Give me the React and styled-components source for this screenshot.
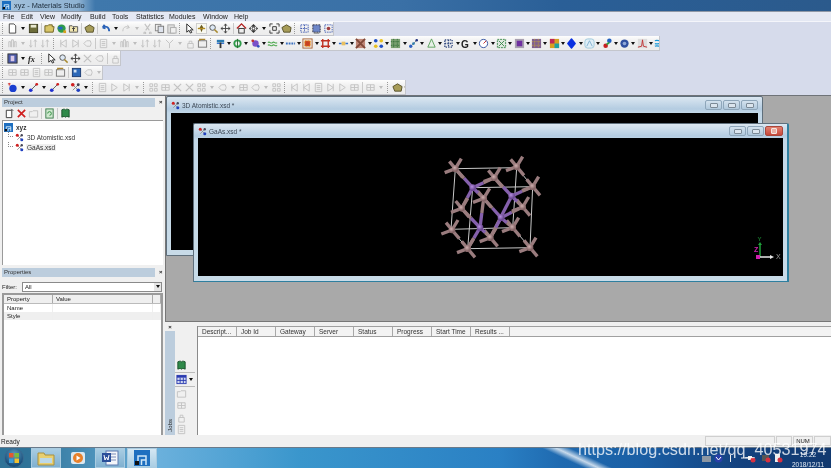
import React from "react";
import styled, { createGlobalStyle } from "styled-components";

const GlobalStyle = createGlobalStyle`
  html, body { margin: 0; padding: 0; background: #000; }
  body { font-family: "Liberation Sans", Arial, sans-serif; }
`;

const Screen = styled.div`
  position: relative;
  width: 831px;
  height: 468px;
  overflow: hidden;
  display: flex;
  flex-direction: column;
  background: #d6dbeb;
  color: #222;
  font-size: 6.5px;
  filter: blur(0.3px);
`;

const TitleBar = styled.div`
  height: 11px;
  flex: none;
  display: flex;
  align-items: center;
  gap: 3px;
  padding-left: 2px;
  font-size: 7.4px;
  color: #1c2b3a;
  background: linear-gradient(90deg, #a9c5dd 0, #9dbdd9 24px, #8fb3d3 78px, #3f78ac 95px, #3a70a6 400px, #2a5f97 560px, #2b5a8c 831px);
`;

const MenuBar = styled.div`
  height: 11px;
  flex: none;
  display: flex;
  align-items: center;
  background: #e4e8f3;
  border-bottom: 1px solid #f4f5fa;
  border-top: 1px solid #8f98a6;
  box-sizing: border-box;
`;

const MenuItem = styled.span`
  width: ${(p) => p.$w}px;
  padding-left: 3px;
  box-sizing: border-box;
  font-size: 7px;
  color: #222;
`;

const Toolbars = styled.div`
  height: 73px;
  flex: none;
  display: flex;
  flex-direction: column;
  background: #d6dbeb;
  border-bottom: 1px solid #6f7378;
`;

const ToolRow = styled.div`
  height: ${(p) => p.$h}px;
  width: ${(p) => p.$w}px;
  flex: none;
  box-sizing: border-box;
  display: flex;
  align-items: center;
  overflow: hidden;
  background: linear-gradient(#fdfdfd, #f0f0f0 40%, #ececec);
  border-right: 1px solid #c4c6cc;
  border-bottom: 1px solid #c4c6cc;
`;

const Tool = styled.span`
  width: 12px;
  height: 12px;
  flex: none;
  display: flex;
  align-items: center;
  justify-content: center;
`;

const ToolIcon = styled.svg`
  width: 11px;
  height: 11px;
  display: block;
`;

const Caret = styled.span`
  width: ${(p) => p.$w}px;
  flex: none;
  display: flex;
  justify-content: center;
  &::after {
    content: "";
    border-left: 2.5px solid transparent;
    border-right: 2.5px solid transparent;
    border-top: 3px solid ${(p) => (p.$off ? "#bdbdbd" : "#111")};
  }
`;

const Sep = styled.span`
  width: 4px;
  height: 11px;
  flex: none;
  display: flex;
  justify-content: center;
  &::after {
    content: "";
    width: 1px;
    background: #c9c9c9;
  }
`;

const Grip = styled.span`
  width: 6px;
  height: 11px;
  flex: none;
  display: flex;
  justify-content: center;
  &::after {
    content: "";
    width: 1px;
    border-left: 1px dotted #9a9a9a;
  }
`;

const Workspace = styled.div`
  flex: 1;
  min-height: 0;
  display: flex;
  background: #f0f0f0;
`;

const SidePanel = styled.div`
  width: 165px;
  flex: none;
  display: flex;
  flex-direction: column;
  background: #f0f0f0;
`;

const DockHead = styled.div`
  height: 9px;
  margin: ${(p) => p.$m};
  display: flex;
  align-items: center;
  gap: 4px;
`;

const DockTitle = styled.div`
  flex: 1;
  height: 9px;
  line-height: 9px;
  padding-left: 2px;
  background: #bccddd;
  font-size: 6px;
  color: #333;
`;

const DockClose = styled.span`
  width: 5px;
  font-size: 6px;
  line-height: 9px;
  font-weight: bold;
  color: #222;
`;

const ProjectTools = styled.div`
  height: 13px;
  padding-left: 3px;
  display: flex;
  align-items: center;
`;

const Tree = styled.div`
  height: 145px;
  margin: 0 0 0 2px;
  width: 161px;
  box-sizing: border-box;
  padding-top: 1px;
  background: #fff;
  border-left: 1px solid #9a9a9a;
  border-top: 1px solid #9a9a9a;
`;

const TreeRow = styled.div`
  height: 10px;
  display: flex;
  align-items: center;
  gap: 2px;
  padding-left: ${(p) => p.$in}px;
  font-size: 6.5px;
  font-weight: ${(p) => (p.$bold ? "bold" : "normal")};
  color: #333;
`;

const TreeLink = styled.span`
  width: 5px;
  height: 5px;
  margin-bottom: 5px;
  flex: none;
  box-sizing: border-box;
  border-left: 1px dotted #888;
  border-bottom: 1px dotted #888;
`;

const TreeLabel = styled.span`
  padding: 0 1px;
  background: ${(p) => (p.$selected ? "#f0f0f0" : "transparent")};
`;

const FilterRow = styled.div`
  height: 11px;
  margin: 4px 2px 1px 2px;
  display: flex;
  align-items: center;
  gap: 5px;
  font-size: 6px;
`;

const FilterBox = styled.div`
  flex: 1;
  height: 10px;
  margin-right: 1px;
  box-sizing: border-box;
  display: flex;
  align-items: center;
  justify-content: space-between;
  padding-left: 2px;
  background: #fff;
  border: 1px solid #8a8a8a;
`;

const FilterArrow = styled.span`
  width: 7px;
  height: 8px;
  display: flex;
  align-items: center;
  justify-content: center;
  background: #e6e6e6;
  &::after {
    content: "";
    border-left: 2px solid transparent;
    border-right: 2px solid transparent;
    border-top: 3px solid #111;
  }
`;

const PropsTable = styled.div`
  flex: 1;
  margin: 0 2px;
  box-sizing: border-box;
  background: #fff;
  border: 2px solid #9a9a9a;
  border-bottom: none;
`;

const PropHead = styled.div`
  height: 8px;
  display: grid;
  grid-template-columns: 49px 100px 1fr;
  background: #efefef;
  border-bottom: 1px solid #bbb;
`;

const PropCell = styled.div`
  padding-left: 3px;
  font-size: 6px;
  line-height: 8px;
  border-right: 1px solid ${(p) => (p.$head ? "#aaa" : "#eee")};
`;

const PropRow = styled.div`
  height: 8px;
  display: grid;
  grid-template-columns: 49px 100px 1fr;
  background: ${(p) => (p.$alt ? "#efefef" : "#fff")};
`;

const RightColumn = styled.div`
  flex: 1;
  min-width: 0;
  display: flex;
  flex-direction: column;
`;

const Desktop = styled.div`
  position: relative;
  height: 225px;
  flex: none;
  background: #a9a9a9;
  border-left: 1px solid #777;
  border-bottom: 1px solid #777;
`;

const MdiWindow = styled.div`
  position: absolute;
  left: ${(p) => p.$x}px;
  top: ${(p) => p.$y}px;
  width: ${(p) => p.$w}px;
  height: ${(p) => p.$h}px;
  box-sizing: border-box;
  display: flex;
  flex-direction: column;
  padding: 0 4px 5px 4px;
  border: 1px solid #5f6f7c;
  border-radius: 2px 2px 0 0;
  background: linear-gradient(#dbe7f1, #b4cce1 12px, #c3d8e8 16px, #c8dbe8);
  ${(p) => p.$front && "border-right: 2px solid #2f7f9f; border-bottom-color: #2f7f9f;"}
`;

const WinTitle = styled.div`
  height: ${(p) => (p.$front ? 14 : 16)}px;
  flex: none;
  display: flex;
  align-items: center;
  gap: 2px;
  font-size: 6.5px;
  color: #3c4754;
`;

const WinButtons = styled.div`
  margin-left: auto;
  display: flex;
  gap: 1px;
`;

const WinButton = styled.span`
  width: ${(p) => (p.$close ? 16 : 15)}px;
  height: 8px;
  display: flex;
  align-items: center;
  justify-content: center;
  border: 1px solid ${(p) => (p.$close ? "#a9473c" : "#8ea6ba")};
  border-radius: 2px;
  background: ${(p) => (p.$close ? "linear-gradient(#e2806f, #c8483a)" : "linear-gradient(#d4e2ee, #b0c8dc)")};
  &::after {
    content: "";
    width: ${(p) => (p.$close ? 4 : 6)}px;
    height: ${(p) => (p.$close ? 4 : 3)}px;
    border: 1px solid ${(p) => (p.$close ? "#f4e4e0" : "#7c8a96")};
    border-radius: 1px;
    background: ${(p) => (p.$close ? "#e9b0a6" : "#dbe5ee")};
  }
`;

const Viewport = styled.div`
  position: relative;
  flex: 1;
  min-height: 0;
  background: #000;
`;

const Crystal = styled.svg`
  position: absolute;
  left: 223px;
  top: 8px;
  width: 130px;
  height: 115px;
`;

const Axes = styled.svg`
  position: absolute;
  right: 0px;
  bottom: 10px;
  width: 32px;
  height: 30px;
`;

const JobsPanel = styled.div`
  flex: 1;
  min-height: 0;
  display: flex;
  background: #f0f0f0;
`;

const JobsDock = styled.div`
  width: 10px;
  flex: none;
  display: flex;
  flex-direction: column;
`;

const JobsClose = styled.div`
  height: 9px;
  text-align: center;
  font-size: 6px;
  font-weight: bold;
  line-height: 10px;
`;

const JobsTab = styled.div`
  flex: 1;
  display: flex;
  align-items: flex-end;
  justify-content: center;
  background: #bccddd;
`;

const JobsLabel = styled.span`
  writing-mode: vertical-rl;
  transform: rotate(180deg);
  font-size: 6px;
  padding-top: 3px;
  color: #222;
`;

const JobsTools = styled.div`
  width: 22px;
  flex: none;
  padding-top: 37px;
  box-sizing: border-box;
  display: flex;
  flex-direction: column;
  align-items: flex-start;
`;

const JobsTool = styled.div`
  height: ${(p) => (p.$rule ? 15 : 12.5)}px;
  display: flex;
  align-items: center;
  width: 20px;
  box-sizing: border-box;
  border-bottom: ${(p) => (p.$rule ? "1px solid #bbb" : "none")};
`;

const JobsTable = styled.div`
  flex: 1;
  margin-top: 4px;
  background: #fff;
  border-left: 1px solid #8a8a8a;
`;

const JobsHead = styled.div`
  height: 11px;
  display: flex;
  background: #f3f3f3;
  border-top: 1px solid #a0a0a0;
  border-bottom: 1px solid #a0a0a0;
  box-sizing: border-box;
`;

const JobsCol = styled.div`
  width: 39px;
  box-sizing: border-box;
  padding-left: 4px;
  font-size: 6.5px;
  line-height: 10px;
  white-space: nowrap;
  color: #333;
  border-right: 1px solid #a8a8a8;
`;

const StatusBar = styled.div`
  height: 12px;
  flex: none;
  display: flex;
  align-items: center;
  background: #f0f0f0;
  font-size: 6.5px;
  color: #222;
`;

const StatusText = styled.span`
  padding-left: 1px;
  margin-right: auto;
`;

const StatusPane = styled.span`
  width: ${(p) => p.$w}px;
  height: 10px;
  box-sizing: border-box;
  margin-left: 1px;
  text-align: center;
  line-height: 9px;
  font-size: 6px;
  border: 1px solid #cfcfcf;
`;

const Taskbar = styled.div`
  height: 21px;
  flex: none;
  box-sizing: border-box;
  display: flex;
  align-items: center;
  border-top: 1px solid #6a7a8a;
  background:
    linear-gradient(25deg, transparent 247px, rgba(255, 255, 255, 0.75) 253px, transparent 259px),
    linear-gradient(90deg, #2f7398 0, #2f7398 28px, #6ab0dc 160px, #3a96cc 300px, #2a80c4 500px, #1f6ab0 560px, #1a5fa5 640px, #14427f 740px, #12396f 831px);
`;

const StartOrb = styled.div`
  width: 20px;
  height: 20px;
  flex: none;
  margin: 0 7px 0 4px;
  border-radius: 50%;
  border: 1px solid #3a6a90;
  box-sizing: border-box;
  display: flex;
  align-items: center;
  justify-content: center;
  background: radial-gradient(circle at 50% 30%, #5f9cc0, #184f7c 70%);
`;

const TaskButton = styled.div`
  width: 30px;
  height: 20px;
  flex: none;
  box-sizing: border-box;
  margin-right: 2px;
  display: flex;
  align-items: center;
  justify-content: center;
  border: ${(p) => (p.$plain ? "none" : "1px solid #a9cbe0")};
  background: ${(p) =>
    p.$active
      ? "linear-gradient(#d4e7f3, #a9cde3)"
      : p.$plain
      ? "transparent"
      : "linear-gradient(#a9cde3, #7fb0d0)"};
`;

const Tray = styled.div`
  margin-left: auto;
  display: flex;
  align-items: center;
  gap: 3px;
  padding-right: 1px;
`;

const TrayIcon = styled.svg`
  width: ${(p) => p.$w || 9}px;
  height: 9px;
`;

const Clock = styled.div`
  width: 44px;
  padding-top: 3px;
  text-align: center;
  font-size: 6.5px;
  line-height: 10px;
  color: #e6edf5;
`;

const Watermark = styled.div`
  position: absolute;
  left: 578px;
  top: 440px;
  font-size: 16.2px;
  line-height: 18px;
  color: rgba(255, 255, 255, 0.78);
  white-space: nowrap;
`;

const grey = "#c2c2c2";
const bars = (c) => (
  <path d="M2 10V4h2v6M5 10V2h2v8M8 10V4h2v6" fill="none" stroke={c} />
);

// 12 x 12 drawings for the toolbar buttons
const ICONS = {
  doc: <path d="M2.5 1h5l2 2v8h-7z" fill="#fff" stroke="#444" />,
  save: <><rect x="1.5" y="1.5" width="9" height="9" fill="#6d6d3a" stroke="#3c3c20" /><rect x="3" y="2" width="6" height="3" fill="#e8e8d0" /></>,
  open: <path d="M1 10V3h3l1-1h4v2h2l-1 6z" fill="#d8c568" stroke="#6a5e20" />,
  globe: <><circle cx="6" cy="6" r="4.5" fill="#2f9b4a" /><path d="M2 4h5v3H3z" fill="#2266c4" /><path d="M8 8h3v3H8z" fill="#d8a020" /></>,
  folderUp: <><path d="M1.5 10V3h3l1 1h5v6z" fill="#f1e6b0" stroke="#555" /><path d="M6 9V5M4.5 6.5 6 5l1.5 1.5" stroke="#333" fill="none" /></>,
  box: <path d="M1 5l5-3 5 3-1 5H3z" fill="#a79c58" stroke="#55502a" />,
  undo: <path d="M10 9C10 4 6 3 3 5L5 2M3 5l3 1" fill="none" stroke="#2a62b8" strokeWidth="2" />,
  redo: <path d="M2 9c0-5 4-6 7-4L7 2M9 5 6 6" fill="none" stroke={grey} />,
  cut: <path d="M3 1l5 7M9 1 4 8M3 10a1 1 0 1 0 .1 0M9 10a1 1 0 1 0 .1 0" fill="none" stroke={grey} strokeWidth="1.2" />,
  copy: <><rect x="1.5" y="1.5" width="6" height="7" fill="#eee" stroke="#888" /><rect x="4.5" y="3.5" width="6" height="7" fill="#dfe4ee" stroke="#777" /></>,
  paste: <><rect x="2" y="2" width="7" height="9" fill="#ddd" stroke="#aaa" /><rect x="5" y="5" width="6" height="6" fill="#f0f0f0" stroke="#aaa" /></>,
  cursor: <path d="M3 1v9l2.5-2 1.5 3 1.5-.7L7 7.5h3z" fill="#fff" stroke="#222" />,
  rotate: <><rect x="0.5" y="0.5" width="11" height="11" fill="#f8f8f0" stroke="#ccc" /><path d="M6 2l2 3-2 5-2-5z" fill="#6b5b1e" /><path d="M2 6h8" stroke="#b08a20" strokeWidth="1.5" /></>,
  zoom: <><circle cx="5" cy="5" r="3" fill="#dde8f4" stroke="#555" /><path d="M7 7l3.5 3.5" stroke="#a88a30" strokeWidth="1.6" /></>,
  pan: <path d="M6 1v10M1 6h10M6 1 4.5 3M6 1l1.5 2M6 11 4.5 9M6 11l1.5-2M1 6l2-1.5M1 6l2 1.5M11 6 9 4.5M11 6 9 7.5" fill="none" stroke="#444" />,
  house: <><path d="M1 6l5-5 5 5" fill="none" stroke="#b02020" strokeWidth="1.4" /><rect x="3" y="6" width="6" height="5" fill="#eee" stroke="#333" /></>,
  arrows: <><path d="M6 1l3 3H3zM6 11 3 8h6zM1 6l2-2v4zM11 6 9 4v4z" fill="#333" /><circle cx="6" cy="6" r="1.5" fill="#fff" stroke="#333" /></>,
  fit: <path d="M1 4V1h3M8 1h3v3M11 8v3H8M4 11H1V8M4 4h4v4H4z" fill="none" stroke="#333" />,
  lat1: <path d="M2 2h8v8H2z M6 2v8M2 6h8" fill="none" stroke="#3a55b0" strokeDasharray="1.5 1" />,
  lat2: <><rect x="2" y="2" width="8" height="8" fill="#6d86c8" stroke="#334" strokeDasharray="2 1" /><path d="M3 11h6" stroke="#666" /></>,
  lat3: <><path d="M2 2h8v8H2z" fill="none" stroke="#3a55b0" strokeDasharray="1.5 1" /><circle cx="6" cy="6" r="2" fill="#a04040" /></>,
  bars: bars(grey),
  updown: <path d="M3 2v8M1.5 8 3 10l1.5-2M8 10V2M6.5 4 8 2l1.5 2" fill="none" stroke={grey} />,
  triL: <path d="M9 2v8L3 6zM3 2v8" fill="none" stroke={grey} />,
  triR: <path d="M3 2v8l6-4zM9 2v8" fill="none" stroke={grey} />,
  hexa: <path d="M2 6l3-3h4l1 3-1 3H5z" fill="none" stroke={grey} />,
  page: <path d="M2.5 1.5h7v9h-7zM4 4h4M4 6h4M4 8h4" fill="none" stroke={grey} />,
  fork: <path d="M2 2l4 4 4-4M6 6v5" fill="none" stroke={grey} />,
  lock: <path d="M3 6h6v5H3zM4.5 6V3.5h3V6" fill="none" stroke={grey} />,
  grid: <path d="M2 3h8v6H2zM2 6h8M6 3v6" fill="none" stroke={grey} />,
  play: <path d="M3 2l6 4-6 4z" fill="none" stroke={grey} />,
  nodes: <path d="M2 2l4 4 4-4M2 10l4-4 4 4" fill="none" stroke={grey} strokeWidth="1.2" />,
  fxa: <><rect x="1" y="1" width="10" height="10" fill="#4b5aa8" stroke="#333" /><rect x="4" y="3" width="4" height="6" fill="#d9c8e8" /></>,
  fx: <text x="0" y="10" fontSize="9" fontFamily="Liberation Serif, serif" fontStyle="italic" fontWeight="bold" fill="#222">fx</text>,
  panel: <><rect x="1.5" y="3" width="9" height="7" fill="#eee" stroke="#777" /><path d="M3 3V1.5h6" fill="none" stroke="#a88430" strokeWidth="1.4" /></>,
  blueDoc: <><rect x="1.5" y="1.5" width="9" height="9" fill="#2c68b8" stroke="#1a3a70" /><rect x="3" y="3" width="3" height="3" fill="#cfe0f0" /></>,
  ball: <><circle cx="6.5" cy="7" r="4" fill="#1a3fd0" /><path d="M1 2h3M2.5 1v3" stroke="#d03030" /></>,
  link: <><path d="M2 10l8-8" stroke="#555" /><circle cx="3" cy="9" r="2" fill="#2030d0" /><circle cx="9.5" cy="2.5" r="1.5" fill="#d02020" /></>,
  cells: <path d="M2 2h3v3H2zM7 2h3v3H7zM2 7h3v3H2zM7 7h3v3H7z" fill="none" stroke={grey} />,
  atomB: <><path d="M2 6h8" stroke="#2c6ad0" /><rect x="2" y="2" width="8" height="3" fill="#2a7ab0" /><rect x="5" y="5" width="2" height="6" fill="#333" /></>,
  spinG: <><circle cx="6" cy="6" r="3.5" fill="none" stroke="#2f9b4a" strokeWidth="2" /><path d="M6 1v10" stroke="#2a6a30" /></>,
  spinP: <><circle cx="6" cy="6" r="3.5" fill="#7a50c8" /><circle cx="3" cy="3" r="1.5" fill="#c03030" /><circle cx="9" cy="9" r="1.5" fill="#3050c0" /></>,
  green: <path d="M1 5c2-2 3 2 5 0s3 2 5 0M1 8c2-2 3 2 5 0s3 2 5 0" fill="none" stroke="#4aa84a" strokeWidth="1.2" />,
  dash: <path d="M1 6h10" stroke="#3a70c0" strokeWidth="2" strokeDasharray="2 1" />,
  check: <><rect x="1" y="1" width="10" height="10" fill="none" stroke="#a86030" /><path d="M3 3h6v6H3z" fill="#c84020" stroke="#f0a020" strokeDasharray="2 1" /></>,
  wires: <path d="M1 3h10M1 9h10M3 1v10M9 1v10" stroke="#c03020" strokeWidth="1.5" fill="none" />,
  lines: <><path d="M1 6h3M8 6h3" stroke="#3070d0" strokeWidth="1.4" /><path d="M4 4h4v4H4z" fill="#e8c060" /></>,
  mosaic: <><rect x="1" y="1" width="10" height="10" fill="#c08878" /><path d="M1 1l10 10M11 1 1 11" stroke="#804838" strokeWidth="2" /></>,
  dots: <><circle cx="3" cy="3" r="2" fill="#2050c8" /><circle cx="9" cy="3" r="2" fill="#e8c020" /><circle cx="3" cy="9" r="2" fill="#e8c020" /><circle cx="9" cy="9" r="2" fill="#2050c8" /></>,
  greenBox: <><rect x="1" y="1" width="10" height="10" fill="#7aa070" /><path d="M1 4h10M1 8h10M4 1v10M8 1v10" stroke="#2c6a30" strokeDasharray="1 1" /></>,
  diag: <><path d="M2 10l8-8" stroke="#888" /><circle cx="3" cy="9" r="1.8" fill="#3060c0" /><circle cx="6" cy="6" r="1.5" fill="#3080b0" /><circle cx="9.5" cy="2.5" r="1.4" fill="#203080" /></>,
  flask: <path d="M6 1 2 10h8z" fill="#e6f0e6" stroke="#5aa05a" />,
  dotted: <path d="M2 2h8v8H2zM6 2v8M2 6h8" fill="none" stroke="#334a80" strokeWidth="1.4" strokeDasharray="1.5 1.2" />,
  gee: <text x="0" y="10.5" fontSize="11" fontWeight="bold" fontFamily="Liberation Sans, sans-serif" fill="#222">G</text>,
  dial: <><circle cx="6" cy="6" r="4.5" fill="#fff" stroke="#3050a0" /><path d="M6 6l3-3" stroke="#c02020" /></>,
  greenX: <><rect x="1.5" y="1.5" width="9" height="9" fill="#dfe8df" stroke="#3a8a4a" strokeDasharray="2 1" /><path d="M3 3l6 6M9 3 3 9" stroke="#3a8a4a" /></>,
  purple: <><rect x="1" y="1" width="10" height="10" fill="#a8a0b0" /><path d="M3 3h6v6H3z" fill="#7030a0" /></>,
  quilt: <><rect x="1" y="1" width="10" height="10" fill="#806090" /><path d="M1 4h10M1 8h10M4 1v10M8 1v10" stroke="#c0a040" strokeDasharray="1 1" /></>,
  color: <><rect x="1" y="1" width="10" height="10" fill="#d8a020" /><rect x="1" y="1" width="5" height="5" fill="#c02858" /><rect x="6" y="6" width="5" height="5" fill="#20a0a0" /></>,
  blob: <path d="M6 1l4 5-4 5-4-5z" fill="#0a30e0" stroke="#0a30e0" strokeLinejoin="round" strokeWidth="1.5" />,
  web: <><rect x="1" y="1" width="10" height="10" rx="3" fill="#e0eef6" stroke="#9cc8dc" /><path d="M3 9l3-6 3 6" fill="none" stroke="#80b0d0" /></>,
  swirl: <><circle cx="4" cy="8.5" r="2.5" fill="#c82020" /><circle cx="8" cy="3" r="2.5" fill="#2060c0" /><path d="M5 7l3-2" stroke="#30a040" strokeWidth="2" /></>,
  target: <><circle cx="6" cy="6" r="4.5" fill="#3050a0" /><circle cx="6" cy="6" r="2" fill="#90a8d8" /></>,
  peak: <><rect x="1" y="1" width="10" height="10" fill="#ddd" /><path d="M1 10l4-1 1-7 1 7 4 1" fill="none" stroke="#c03030" /></>,
  wave: <path d="M1 3c3-2 7 2 10 0M1 6c3 2 7-2 10 0M1 9c3-2 7 2 10 0" fill="none" stroke="#1898d8" strokeWidth="1.4" />,
  cross: <><path d="M6 1v10M1 6h10" stroke="#445" /><rect x="3.5" y="3.5" width="5" height="5" fill="#7a90c0" /></>,
  cutoff: <circle cx="8" cy="6" r="3.5" fill="#a0c8e0" stroke="#7098b8" />,
  addNew: <><path d="M2.5 2.5h6v8h-6z" fill="#fff" stroke="#333" /><path d="M8 1l2 2" stroke="#333" /></>,
  del: <path d="M2 2l8 8M10 2l-8 8" stroke="#d02020" strokeWidth="1.8" />,
  folderOff: <path d="M1.5 10V4h3l1-1h5v7z" fill="none" stroke={grey} />,
  refresh: <><rect x="2" y="1" width="8" height="10" fill="#cfe8cf" stroke="#3a7a4a" /><path d="M4 6a2 2 0 1 1 2 2" fill="none" stroke="#2a8a3a" /></>,
  book: <path d="M2 2v8c2-1 3-1 4 0 1-1 2-1 4 0V2c-2-1-3-1-4 0-1-1-2-1-4 0z" fill="#2f8a4a" stroke="#18502a" />,
  table: <><rect x="1" y="1.5" width="10" height="9" fill="#d0d8f0" stroke="#2a3ab0" /><rect x="1" y="1.5" width="10" height="2.5" fill="#2a3ab0" /><path d="M1 7h10M4.5 4v6M8 4v6" stroke="#2a3ab0" /></>,
  molecule: <><path d="M3 3l6 6M9 3 3 9" stroke="#888" /><circle cx="3" cy="3" r="2" fill="#d02020" /><circle cx="9" cy="3" r="1.6" fill="#445" /><circle cx="9" cy="9" r="2" fill="#2040c0" /></>,
};

const Icon = ({ k }) => (
  <Tool>
    <ToolIcon viewBox="0 0 12 12">{ICONS[k]}</ToolIcon>
  </Tool>
);

// "|" separator, ":" grip, "v" caret, "x" grey caret, "w" narrow caret
const Items = ({ list }) =>
  list.split(" ").map((t, i) => {
    if (t === "|") return <Sep key={i} />;
    if (t === ":") return <Grip key={i} />;
    if (t === "v") return <Caret key={i} $w={9} />;
    if (t === "x") return <Caret key={i} $w={9} $off />;
    if (t === "w") return <Caret key={i} $w={5.6} />;
    return <Icon key={i} k={t} />;
  });

const row1 = ": doc v save | open globe folderUp | box | undo v redo x cut copy paste : cursor rotate zoom pan | house arrows v fit box : lat1 lat2 lat3";
const row2 =
  ": bars x updown updown : triL triR hexa | page x bars x updown updown fork x lock panel : atomB w spinG w spinP w green w dash w check w wires w lines w mosaic w dots w greenBox w diag w flask w dotted w gee w dial w greenX w purple w quilt w color w blob w web w swirl w target w peak w wave w cross w cutoff";
const row3 = ": fxa v fx : cursor zoom pan nodes hexa | lock";
const row4 = ": grid grid page grid panel | blueDoc hexa x";
const row5 =
  ": ball v link v link v molecule v : page play triR x : cells grid nodes nodes cells x hexa x grid hexa x cells : triL triL page triR play grid | grid x : box box";

const menus = [
  ["File", 18], ["Edit", 19], ["View", 21], ["Modify", 29], ["Build", 22], ["Tools", 24],
  ["Statistics", 33], ["Modules", 34], ["Window", 31], ["Help", 30],
];
const jobCols = ["Descript...", "Job Id", "Gateway", "Server", "Status", "Progress", "Start Time", "Results ..."];

const pink = [
  [103, 68], [287, 62], [335, 122], [220, 95], [188, 157], [305, 183],
  [122, 187], [93, 252], [275, 245], [208, 275], [140, 308], [327, 305],
];
const purple = [[155, 125], [272, 150], [240, 215], [177, 245]];
const bonds = [
  [0, 0], [0, 3], [0, 4], [0, 6],
  [1, 3], [1, 2], [1, 5], [1, 9],
  [2, 4], [2, 5], [2, 8], [2, 9],
  [3, 6], [3, 4], [3, 9], [3, 10],
];
const stubs = [[18, -30], [-32, 12], [-18, -22], [22, 26]];
const cell = "M103 68L287 65L275 245L90 250ZM155 125L335 122L327 305L140 308ZM103 68L155 125M287 65L335 122M90 250L140 308M275 245L327 305";

const CrystalView = () => (
  <Crystal viewBox="0 0 390 345">
    <defs>
      <radialGradient id="pinkAtom" cx="40%" cy="35%">
        <stop offset="0" stopColor="#d0b0b0" />
        <stop offset="1" stopColor="#866668" />
      </radialGradient>
      <radialGradient id="purpleAtom" cx="40%" cy="35%">
        <stop offset="0" stopColor="#b68ee0" />
        <stop offset="1" stopColor="#6d4a94" />
      </radialGradient>
    </defs>
    <path d={cell} fill="none" stroke="#c8c8c8" strokeWidth="3" />
    {pink.map(([x, y]) =>
      stubs.map(([dx, dy], i) => (
        <line key={`${x}${i}`} x1={x} y1={y} x2={x + dx} y2={y + dy} stroke="#9a7c7e" strokeWidth="10" />
      ))
    )}
    {bonds.map(([a, b], i) => {
      const [x1, y1] = purple[a];
      const [x2, y2] = pink[b];
      const mx = (x1 + x2) / 2;
      const my = (y1 + y2) / 2;
      return (
        <g key={i}>
          <line x1={x1} y1={y1} x2={mx} y2={my} stroke="#8560ac" strokeWidth="10" />
          <line x1={mx} y1={my} x2={x2} y2={y2} stroke="#9a7c7e" strokeWidth="10" />
        </g>
      );
    })}
    {pink.map(([x, y]) => <circle key={`p${x}`} cx={x} cy={y} r="10" fill="url(#pinkAtom)" />)}
    {purple.map(([x, y]) => <circle key={`g${x}`} cx={x} cy={y} r="10" fill="url(#purpleAtom)" />)}
  </Crystal>
);

const AxesView = () => (
  <Axes viewBox="0 0 32 30">
    <path d="M9 21V8" stroke="#1fa03a" strokeWidth="1.5" />
    <path d="M9 21h10" stroke="#e8e8e8" strokeWidth="1.5" />
    <path d="M19 19l4 2-4 2z" fill="#e8e8e8" />
    <path d="M7 9l2-3 2 3z" fill="#1fa03a" />
    <rect x="5" y="19" width="4" height="4" fill="#d020b0" />
    <text x="6.5" y="5" fontSize="6" fill="#1fa03a" fontFamily="Liberation Sans, sans-serif">Y</text>
    <text x="3" y="16" fontSize="7" fontWeight="bold" fill="#d020b0" fontFamily="Liberation Sans, sans-serif">Z</text>
    <text x="25" y="23" fontSize="7" fill="#9a9a9a" fontFamily="Liberation Sans, sans-serif">X</text>
  </Axes>
);

const AppLogo = () => (
  <svg width="9" height="9" viewBox="0 0 12 12">
    <rect width="12" height="12" fill="#1e6fc0" />
    <path d="M3 11V5h6v6M5.5 11V7.5H9" fill="none" stroke="#d8ecf8" strokeWidth="1.2" />
    <rect x="1" y="8" width="3" height="3" fill="#111" />
  </svg>
);

const DocMolecule = () => (
  <svg width="9" height="9" viewBox="0 0 12 12">{ICONS.molecule}</svg>
);

const WinControls = ({ front }) => (
  <WinButtons>
    <WinButton />
    <WinButton />
    <WinButton $close={front} />
  </WinButtons>
);

const App = () => (
  <Screen>
    <GlobalStyle />
    <TitleBar>
      <AppLogo />
      <span>xyz - Materials Studio</span>
    </TitleBar>
    <MenuBar>
      {menus.map(([m, w]) => <MenuItem key={m} $w={w}>{m}</MenuItem>)}
    </MenuBar>
    <Toolbars>
      <ToolRow $h={14} $w={334}><Items list={row1} /></ToolRow>
      <ToolRow $h={15} $w={660}><Items list={row2} /></ToolRow>
      <ToolRow $h={15} $w={121}><Items list={row3} /></ToolRow>
      <ToolRow $h={14} $w={103}><Items list={row4} /></ToolRow>
      <ToolRow $h={15} $w={406}><Items list={row5} /></ToolRow>
    </Toolbars>
    <Workspace>
      <SidePanel>
        <DockHead $m="2px 1px 0 2px">
          <DockTitle>Project</DockTitle>
          <DockClose>×</DockClose>
        </DockHead>
        <ProjectTools>
          <Items list="addNew del folderOff | refresh | book" />
        </ProjectTools>
        <Tree>
          <TreeRow $in={1} $bold><AppLogo /><TreeLabel>xyz</TreeLabel></TreeRow>
          <TreeRow $in={5}><TreeLink /><DocMolecule /><TreeLabel>3D Atomistic.xsd</TreeLabel></TreeRow>
          <TreeRow $in={5}><TreeLink /><DocMolecule /><TreeLabel $selected>GaAs.xsd</TreeLabel></TreeRow>
        </Tree>
        <DockHead $m="3px 1px 0 2px">
          <DockTitle>Properties</DockTitle>
          <DockClose>×</DockClose>
        </DockHead>
        <FilterRow>
          <span>Filter:</span>
          <FilterBox>
            <span>All</span>
            <FilterArrow />
          </FilterBox>
        </FilterRow>
        <PropsTable>
          <PropHead>
            <PropCell $head>Property</PropCell>
            <PropCell $head>Value</PropCell>
            <PropCell $head />
          </PropHead>
          <PropRow><PropCell>Name</PropCell><PropCell /><PropCell /></PropRow>
          <PropRow $alt><PropCell>Style</PropCell><PropCell /><PropCell /></PropRow>
        </PropsTable>
      </SidePanel>
      <RightColumn>
        <Desktop>
          <MdiWindow $x={0} $y={0} $w={597} $h={160}>
            <WinTitle>
              <DocMolecule />
              <span>3D Atomistic.xsd *</span>
              <WinControls />
            </WinTitle>
            <Viewport />
          </MdiWindow>
          <MdiWindow $front $x={27} $y={27} $w={596} $h={159}>
            <WinTitle $front>
              <DocMolecule />
              <span>GaAs.xsd *</span>
              <WinControls front />
            </WinTitle>
            <Viewport>
              <CrystalView />
              <AxesView />
            </Viewport>
          </MdiWindow>
        </Desktop>
        <JobsPanel>
          <JobsDock>
            <JobsClose>×</JobsClose>
            <JobsTab>
              <JobsLabel>Jobs</JobsLabel>
            </JobsTab>
          </JobsDock>
          <JobsTools>
            <JobsTool $rule><Icon k="book" /></JobsTool>
            <JobsTool $rule><Icon k="table" /><Caret $w={7} /></JobsTool>
            <JobsTool><Icon k="folderOff" /></JobsTool>
            <JobsTool><Icon k="grid" /></JobsTool>
            <JobsTool><Icon k="lock" /></JobsTool>
            <JobsTool><Icon k="page" /></JobsTool>
          </JobsTools>
          <JobsTable>
            <JobsHead>
              {jobCols.map((c) => <JobsCol key={c}>{c}</JobsCol>)}
            </JobsHead>
          </JobsTable>
        </JobsPanel>
      </RightColumn>
    </Workspace>
    <StatusBar>
      <StatusText>Ready</StatusText>
      <StatusPane $w={70} />
      <StatusPane $w={16} />
      <StatusPane $w={20}>NUM</StatusPane>
      <StatusPane $w={17} />
    </StatusBar>
    <Taskbar>
      <StartOrb>
        <svg width="10" height="10" viewBox="0 0 10 10">
          <rect width="4.5" height="4.5" fill="#e25a30" />
          <rect x="5.5" width="4.5" height="4.5" fill="#7dbb3a" />
          <rect y="5.5" width="4.5" height="4.5" fill="#3a9ad8" />
          <rect x="5.5" y="5.5" width="4.5" height="4.5" fill="#f0c030" />
        </svg>
      </StartOrb>
      <TaskButton>
        <svg width="18" height="16" viewBox="0 0 18 16">
          <path d="M1 3h6l1 2h9v10H1z" fill="#e8cf70" stroke="#a89040" />
          <rect x="3" y="8" width="12" height="5" fill="#bcd8e8" />
        </svg>
      </TaskButton>
      <TaskButton $plain>
        <svg width="16" height="16" viewBox="0 0 16 16">
          <rect x="1" y="2" width="14" height="12" rx="2" fill="#dbe8f0" />
          <circle cx="8" cy="8" r="5" fill="#e8802a" />
          <path d="M6.5 5.5v5l4-2.5z" fill="#fff" />
        </svg>
      </TaskButton>
      <TaskButton>
        <svg width="18" height="16" viewBox="0 0 18 16">
          <rect x="5" y="1" width="12" height="14" fill="#f4f6fa" stroke="#5a78b0" />
          <path d="M8 4h7M8 7h7M8 10h7" stroke="#7a8cb8" />
          <rect x="1" y="3" width="9" height="9" fill="#2a4f9a" />
          <path d="M3 5l1 5 1.5-3 1.5 3 1-5" fill="none" stroke="#fff" />
        </svg>
      </TaskButton>
      <TaskButton $active>
        <svg width="16" height="16" viewBox="0 0 16 16">
          <rect width="16" height="16" fill="#1e6fc0" />
          <path d="M4 15V6h8v9M7.5 15v-5H12" fill="none" stroke="#cfe6f6" strokeWidth="1.5" />
          <rect x="1" y="11" width="4" height="4" fill="#111" />
        </svg>
      </TaskButton>
      <Tray>
        <TrayIcon viewBox="0 0 9 9"><rect y="2" width="9" height="6" fill="#8d97a3" /></TrayIcon>
        <TrayIcon viewBox="0 0 9 9"><circle cx="4.5" cy="4.5" r="4" fill="#2a3fa8" /><path d="M2 3l2.5 3L7 3" stroke="#fff" fill="none" /></TrayIcon>
        <TrayIcon viewBox="0 0 9 9"><path d="M4.5 1v7" stroke="#eee" /></TrayIcon>
        <TrayIcon $w={21} viewBox="0 0 21 9"><path d="M3 4h12" stroke="#eee" /><rect x="10" y="2" width="4" height="4" fill="#eee" /><circle cx="15" cy="6" r="2.5" fill="#d83040" /></TrayIcon>
        <TrayIcon viewBox="0 0 9 9"><rect y="1" width="7" height="6" fill="#555" /><circle cx="6" cy="6" r="2.5" fill="#d83040" /></TrayIcon>
        <TrayIcon viewBox="0 0 9 9"><rect x="1" width="5" height="8" fill="#eee" /><circle cx="6" cy="6" r="2.5" fill="#d83040" /></TrayIcon>
        <Clock>
          <div>19:22</div>
          <div>2018/12/11</div>
        </Clock>
      </Tray>
    </Taskbar>
    <Watermark>https://blog.csdn.net/qq_40531974</Watermark>
  </Screen>
);

export default App;
